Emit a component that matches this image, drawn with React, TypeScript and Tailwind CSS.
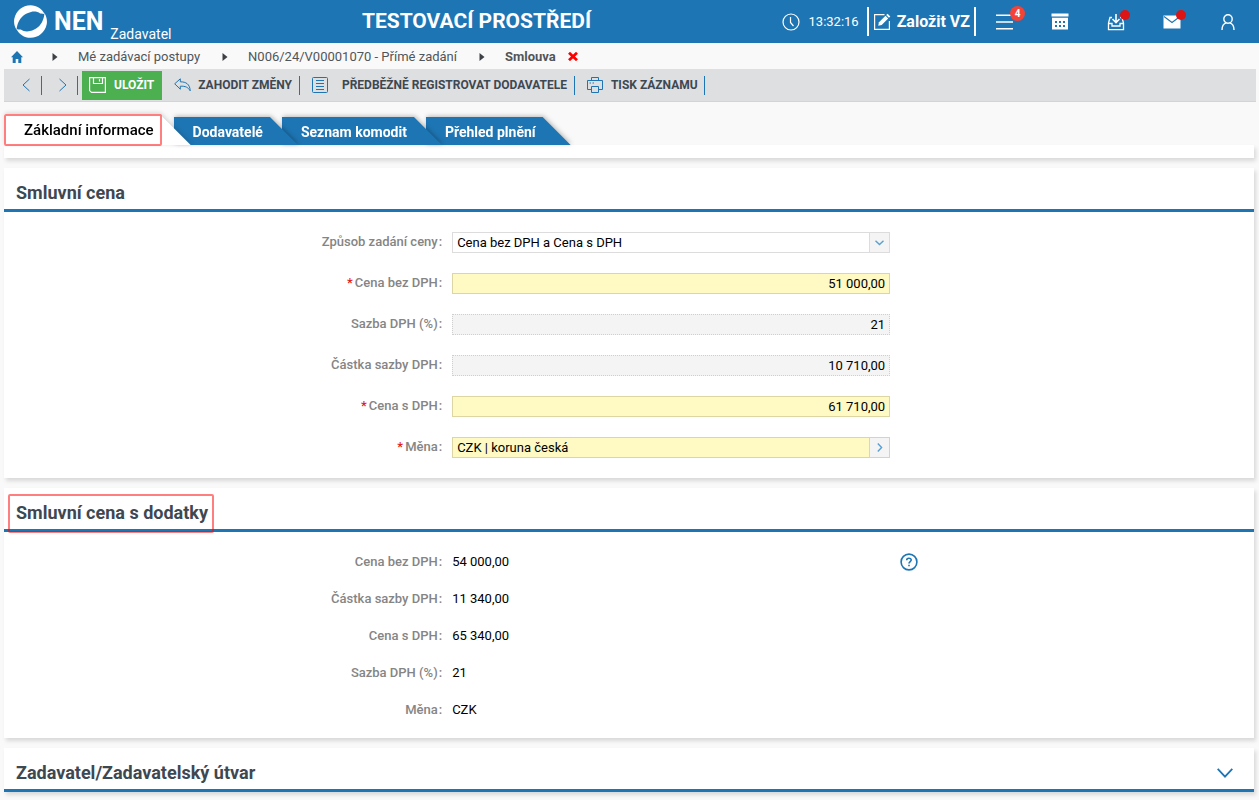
import type { ReactNode } from 'react';

type FieldProps = {
  id: string;
  label: string;
  required?: boolean;
  children: ReactNode;
};

function Separator() {
  return <span className="w-px h-[19px] bg-[#1e75b3] shrink-0" />;
}

function FormRow({ id, label, required, children }: FieldProps) {
  return (
    <div className="flex items-center h-[21px] gap-[10px] pl-px">
      <label htmlFor={id} className="w-[35%] pb-[2px] text-right font-medium text-[#858585]">
        {required && <span className="text-[#e02020] mr-[2px]">*</span>}
        {label}
        <span className="ml-px">:</span>
      </label>
      <div className="relative w-[438px] h-full">{children}</div>
    </div>
  );
}

function NumberInput({ id, value, readOnly }: { id: string; value: string; readOnly?: boolean }) {
  return (
    <input
      id={id}
      type="text"
      defaultValue={value}
      readOnly={readOnly}
      className={
        readOnly
          ? 'block w-full h-[21px] px-1 text-right bg-[#f4f4f4] border border-dotted border-[#cfcfcf] outline-none'
          : 'block w-full h-[21px] px-1 text-right bg-[#fff9c4] border border-[#ddd6a3] outline-none'
      }
    />
  );
}

function ValueRow({ label, value, help }: { label: string; value: string; help?: boolean }) {
  return (
    <div className="flex items-center h-[21px] gap-[10px] pl-px">
      <dt className="w-[35%] text-right font-medium text-[#858585]">
        {label}
        <span className="ml-px">:</span>
      </dt>
      <dd className="w-[438px]">{value}</dd>
      {help && (
        <button type="button" aria-label="Nápověda">
          <svg width="18" height="18" viewBox="0 0 18 18" fill="none" stroke="#1e75b3">
            <circle cx="9" cy="9" r="7.9" strokeWidth="1.6" />
            <path d="M6.7 7.2C6.7 4.6 11.2 4.6 11.2 7.1C11.2 8.7 9 8.6 9 10.6M9 11.7V13.2" strokeWidth="1.6" />
          </svg>
        </button>
      )}
    </div>
  );
}

function SectionTitle({ children, marked, collapsed }: { children: ReactNode; marked?: boolean; collapsed?: boolean }) {
  return (
    <div className="relative flex items-center justify-between h-11 pl-3 pr-[21px] pt-2 border-b-[3px] border-[#1e75b3]">
      <h2 className="text-[18px] leading-6 font-bold text-[#3d4852]">{children}</h2>
      {collapsed && (
        <button type="button" aria-label="Rozbalit">
          <svg width="16" height="10" viewBox="0 0 16 10" fill="none" stroke="#1e75b3" strokeWidth="1.8">
            <path d="M0.7 0.8L8 8.6L15.3 0.8" />
          </svg>
        </button>
      )}
      {marked && <span className="absolute left-[4px] top-[6px] w-[206px] h-[39px] border-2 border-[#ff0000]/50 rounded-xs" />}
    </div>
  );
}

function Crumb({ children }: { children: ReactNode }) {
  return (
    <>
      <svg width="6" height="8" viewBox="0 0 6 8" className="shrink-0">
        <path d="M0.5 0L5.5 4L0.5 8Z" fill="#3d4045" />
      </svg>
      {children}
    </>
  );
}

const tabs = ['Dodavatelé', 'Seznam komodit', 'Přehled plnění'];
const layers = ['z-30', 'z-20', 'z-10'];

function Header() {
  return (
    <header className="flex items-center h-[43px] bg-[#1e75b3] text-white pr-[3px]">
      <a href="#" className="flex items-center h-full pl-[14px]">
        <svg width="33" height="33" viewBox="0 0 33 33">
          <path fill="#fff" d="M0.3 13.8C2 5.7 8.5 0.2 16.5 0.2C22.8 0.2 28.2 3.8 30.6 9C28.8 8.6 27.6 8.3 26.2 8.5C23.8 6.6 20.3 6.1 17 6.9C10.8 8.3 6.6 12 4.4 17.2C3.3 19.6 2.9 22 2.5 24.8C0.4 21.7 -0.4 17.7 0.3 13.8Z" />
          <path fill="#fff" d="M32.7 19.2C31 27.3 24.5 32.8 16.5 32.8C10.2 32.8 4.8 29.2 2.4 24C4.2 24.4 5.4 24.7 6.8 24.5C9.2 26.4 12.7 26.9 16 26.1C22.2 24.7 26.4 21 28.6 15.8C29.7 13.4 30.1 11 30.5 8.2C32.6 11.3 33.4 15.3 32.7 19.2Z" />
        </svg>
        <span className="pl-[7px] pr-[7px] text-[25px] font-bold">NEN</span>
        <span className="text-[14px] leading-5 pt-[25px]">Zadavatel</span>
      </a>
      <h1 className="flex-1 pb-px text-center text-[21px] font-bold">TESTOVACÍ PROSTŘEDÍ</h1>
      <div className="flex items-center gap-[9px]">
        <svg width="18" height="18" viewBox="0 0 18 18" fill="none" stroke="#fff" strokeWidth="1.2">
          <circle cx="9" cy="9" r="8" />
          <path d="M8.5 4V9.5L11.5 13" />
        </svg>
        <time className="text-[13px]">13:32:16</time>
      </div>
      <button type="button" className="flex items-center gap-[6px] h-[29px] ml-2 px-1 border-x-2 border-white">
        <svg width="18" height="18" viewBox="0 0 18 18" fill="none" stroke="#fff" strokeWidth="1.2">
          <path d="M11.5 1.6H1.6V16.4H16.4V8" />
          <path d="M5.2 12.8L6 9.3L12.5 2.8L15.2 5.5L8.7 12Z" fill="#fff" stroke="none" />
          <path d="M13.2 2.1L14.6 0.8L17.3 3.4L15.9 4.8Z" fill="#fff" stroke="none" />
        </svg>
        <span className="text-[16px] font-bold">Založit VZ</span>
      </button>
      <nav className="flex items-center h-full">
        <button type="button" aria-label="Nabídka" className="relative flex justify-center w-14">
          <svg width="17" height="16" viewBox="0 0 17 16" stroke="#fff" strokeWidth="1.6">
            <path d="M0 1.2H17M0 8H17M0 14.8H17" />
          </svg>
          <span className="absolute left-[34px] -top-2 w-[15px] h-[15px] rounded-full bg-[#f44336] text-[10px] leading-[15px] font-bold text-center">4</span>
        </button>
        <button type="button" aria-label="Kalendář" className="flex justify-center w-14">
          <svg width="18" height="17" viewBox="0 0 18 17">
            <path d="M0.5 0.5H17.5V3.5H0.5ZM1 4.7H17V16.5H1Z" fill="#fff" />
            <path d="M4 8H6V10H4ZM8 8H10V10H8ZM12 8H14V10H12ZM4 12H6V14H4ZM8 12H10V14H8ZM12 12H14V14H12Z" fill="#1e75b3" />
          </svg>
        </button>
        <button type="button" aria-label="Příchozí" className="relative flex justify-center w-14">
          <svg width="18" height="18" viewBox="0 0 18 18" fill="none" stroke="#fff" strokeWidth="1.3">
            <path d="M9 1V9.5M5.5 6L9 9.5L12.5 6" strokeWidth="1.6" />
            <path d="M5 4.5H3L1.5 10V16.7H16.5V10L15 4.5H13M1.5 10.5H5V13H13V10.5H16.5" />
          </svg>
          <span className="absolute left-[32px] -top-[3px] w-[10px] h-[10px] rounded-full bg-[#dc1414]" />
        </button>
        <button type="button" aria-label="Zprávy" className="relative flex justify-center w-14">
          <svg width="18" height="14" viewBox="0 0 18 14">
            <path d="M0.5 0.5H17.5V13.5H0.5Z" fill="#fff" />
            <path d="M1 1.5L9 7.5L17 1.5" fill="none" stroke="#1e75b3" strokeWidth="1.1" />
          </svg>
          <span className="absolute left-[32px] -top-[5px] w-[10px] h-[10px] rounded-full bg-[#dc1414]" />
        </button>
        <button type="button" aria-label="Uživatel" className="flex justify-center w-14">
          <svg width="14" height="16" viewBox="0 0 14 16" fill="none" stroke="#fff" strokeWidth="1.4">
            <circle cx="7" cy="5" r="4.2" />
            <path d="M1 16C1 12 3 9.5 5.4 8.9M13 16C13 12 11 9.5 8.6 8.9" />
          </svg>
        </button>
      </nav>
    </header>
  );
}

function Toolbar() {
  return (
    <div className="flex items-center h-[33px] ml-1 mr-[3px] bg-[#dedfe1] border-b border-[#d3d4d6] text-[12px] font-bold text-[#3d4852]">
      <button type="button" aria-label="Předchozí" className="flex justify-center w-[37px] pl-[6px]">
        <svg width="8" height="14" viewBox="0 0 8 14" fill="none" stroke="#1e75b3">
          <path d="M7.5 1L1 7L7.5 13" />
        </svg>
      </button>
      <Separator />
      <button type="button" aria-label="Další" className="flex justify-center w-[35px] pl-[6px]">
        <svg width="8" height="14" viewBox="0 0 8 14" fill="none" stroke="#1e75b3">
          <path d="M0.5 1L7 7L0.5 13" />
        </svg>
      </button>
      <Separator />
      <button type="button" className="flex items-center gap-2 h-[29px] ml-1 pl-[7px] pr-2 bg-[#4caf50] text-white">
        <svg width="17" height="16" viewBox="0 0 17 16" fill="none" stroke="#fff" strokeWidth="1.2">
          <path d="M0.6 0.6H16.4V15.4H2.5L0.6 13.6ZM4.5 0.6V6.5H13.5V0.6M10.5 2.2V4.6" />
        </svg>
        ULOŽIT
      </button>
      <button type="button" className="flex items-center gap-[7px] pl-3 pr-[7px]">
        <svg width="17" height="14" viewBox="0 0 17 14" fill="none" stroke="#1e75b3" strokeLinejoin="round">
          <path d="M0.7 5.8L6.3 0.8V3.8C12 3.8 15.8 6 16.2 12.8C14 9.2 11.5 8 6.3 8.2V11.2Z" />
        </svg>
        ZAHODIT ZMĚNY
      </button>
      <Separator />
      <button type="button" className="flex items-center gap-[14px] pl-3 pr-[7px]">
        <svg width="16" height="16" viewBox="0 0 16 16" fill="none" stroke="#1e75b3">
          <rect x="0.5" y="0.5" width="15" height="15" rx="1" />
          <path d="M4 3.5H12M4 6.5H12M4 9.5H12M4 12.5H12" />
        </svg>
        PŘEDBĚŽNĚ REGISTROVAT DODAVATELE
      </button>
      <Separator />
      <button type="button" className="flex items-center gap-2 pl-3 pr-[6px]">
        <svg width="16" height="16" viewBox="0 0 16 16" fill="none" stroke="#1e75b3">
          <path d="M4.5 3.5V0.5H11.5V3.5M4.5 12.5H0.5V3.5H15.5V12.5H11.5M4.5 9.5H11.5V15.5H4.5ZM2.5 6H4M5.5 6H7" />
        </svg>
        TISK ZÁZNAMU
      </button>
      <Separator />
    </div>
  );
}

export default function App() {
  return (
    <div className="min-h-screen bg-[#f9f9f9] font-['Roboto',sans-serif] text-[13px] leading-4 text-black">
      <Header />

      {/* Breadcrumb */}
      <nav className="flex items-center h-[26px] pl-[11px] pt-px text-[#50555a]">
        <a href="#" aria-label="Domů" className="mr-[29px]">
          <svg width="12" height="12" viewBox="0 0 12 12" fill="#1e75b3">
            <path d="M6 0L12 6.2H10.3V12H7.3V8H4.7V12H1.7V6.2H0L6 0Z" />
          </svg>
        </a>
        <Crumb>
          <a href="#" className="ml-5 mr-[22px]">Mé zadávací postupy</a>
        </Crumb>
        <Crumb>
          <a href="#" className="ml-5 mr-[22px]">N006/24/V00001070 - Přímé zadání</a>
        </Crumb>
        <Crumb>
          <span className="ml-5 font-bold">Smlouva</span>
        </Crumb>
        <button type="button" aria-label="Zavřít" className="ml-3">
          <svg width="10" height="9" viewBox="0 0 10 9" stroke="#f00" strokeWidth="2.8">
            <path d="M1 0.8L9 8.2M9 0.8L1 8.2" />
          </svg>
        </button>
      </nav>

      <Toolbar />

      <main className="ml-1 mr-[5px]">
        {/* Tabs */}
        <div role="tablist" className="relative flex items-end h-[43px]">
          <div className="relative z-40 -mr-px drop-shadow-[1px_-1px_2px_rgba(0,0,0,0.15)]">
            <button
              type="button"
              role="tab"
              aria-selected="true"
              className="block h-[31px] pl-5 pr-[37px] bg-white text-[15px] font-medium [clip-path:polygon(0_0,calc(100%-31px)_0,100%_100%,0_100%)]"
            >
              Základní informace
            </button>
          </div>
          {tabs.map((tab, i) => (
            <div key={tab} className={`relative ${layers[i]} -ml-4 drop-shadow-[1px_-1px_2px_rgba(0,0,0,0.25)]`}>
              <button
                type="button"
                role="tab"
                aria-selected="false"
                className="block h-7 pt-[2px] pl-[19px] pr-[35px] bg-[#1e75b3] text-white text-[14px] font-bold [clip-path:polygon(0_0,calc(100%-28px)_0,100%_100%,0_100%)]"
              >
                {tab}
              </button>
            </div>
          ))}
          <span className="absolute z-50 left-0 top-3 w-[158px] h-8 border-2 border-[#ff0000]/50 rounded-xs pointer-events-none" />
        </div>
        <div className="h-[13px] bg-white shadow-[2px_3px_4px_rgba(0,0,0,0.13)]" />

        <div className="flex flex-col gap-[10px] mt-[10px]">
          <section className="bg-white shadow-[2px_3px_4px_rgba(0,0,0,0.13)]">
            <SectionTitle>Smluvní cena</SectionTitle>
            <form className="flex flex-col gap-5 py-5">
              <FormRow id="zpusob" label="Způsob zadání ceny">
                <select id="zpusob" className="block appearance-none w-full h-[21px] pl-1 pr-6 bg-white border border-[#dcdcdc] outline-none">
                  <option>Cena bez DPH a Cena s DPH</option>
                </select>
                <span className="absolute right-0 top-0 flex items-center justify-center w-[21px] h-[21px] bg-[#f4f4f4] border border-[#dcdcdc] pointer-events-none">
                  <svg width="9" height="6" viewBox="0 0 9 6" fill="none" stroke="#5aa0d0" strokeWidth="1.4">
                    <path d="M0.5 0.8L4.5 4.6L8.5 0.8" />
                  </svg>
                </span>
              </FormRow>
              <FormRow id="bez-dph" label="Cena bez DPH" required>
                <NumberInput id="bez-dph" value="51 000,00" />
              </FormRow>
              <FormRow id="sazba" label="Sazba DPH (%)">
                <NumberInput id="sazba" value="21" readOnly />
              </FormRow>
              <FormRow id="castka" label="Částka sazby DPH">
                <NumberInput id="castka" value="10 710,00" readOnly />
              </FormRow>
              <FormRow id="s-dph" label="Cena s DPH" required>
                <NumberInput id="s-dph" value="61 710,00" />
              </FormRow>
              <FormRow id="mena" label="Měna" required>
                <input
                  id="mena"
                  type="text"
                  defaultValue="CZK | koruna česká"
                  className="block w-full h-[21px] pl-1 pr-6 bg-[#fff9c4] border border-[#ddd6a3] outline-none"
                />
                <button
                  type="button"
                  aria-label="Vybrat měnu"
                  className="absolute right-0 top-0 flex items-center justify-center w-[21px] h-[21px] bg-[#f4f4f4] border border-[#ddd6a3] border-l-[#d4d4d4]"
                >
                  <svg width="6" height="9" viewBox="0 0 6 9" fill="none" stroke="#5aa0d0" strokeWidth="1.4">
                    <path d="M0.8 0.5L4.6 4.5L0.8 8.5" />
                  </svg>
                </button>
              </FormRow>
            </form>
          </section>

          <section className="bg-white shadow-[2px_3px_4px_rgba(0,0,0,0.13)]">
            <SectionTitle marked>Smluvní cena s dodatky</SectionTitle>
            <dl className="flex flex-col gap-4 pt-[19px] pb-[18px]">
              <ValueRow label="Cena bez DPH" value="54 000,00" help />
              <ValueRow label="Částka sazby DPH" value="11 340,00" />
              <ValueRow label="Cena s DPH" value="65 340,00" />
              <ValueRow label="Sazba DPH (%)" value="21" />
              <ValueRow label="Měna" value="CZK" />
            </dl>
          </section>

          <section className="bg-white shadow-[2px_3px_4px_rgba(0,0,0,0.13)]">
            <SectionTitle collapsed>Zadavatel/Zadavatelský útvar</SectionTitle>
          </section>
        </div>
      </main>
    </div>
  );
}
